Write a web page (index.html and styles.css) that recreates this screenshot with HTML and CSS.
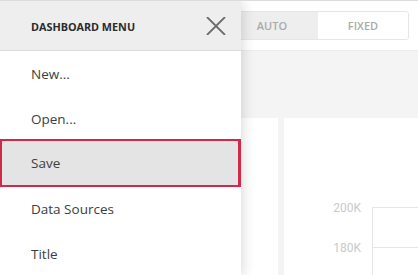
FILE: index.html
```html
<!DOCTYPE html>
<html lang="en">
<head>
<meta charset="utf-8">
<title>Dashboard Menu</title>
<link rel="stylesheet" href="styles.css">
</head>
<body>
<div class="page">
  <header class="toolbar">
    <div class="seg">
      <span class="seg-btn active">AUTO</span>
      <span class="seg-btn">FIXED</span>
    </div>
  </header>
  <main class="canvas">
    <div class="cards">
      <section class="card card-a"></section>
      <section class="card card-b">
        <svg class="chart" width="140" height="160" viewBox="0 0 140 160">
          <line x1="88.5" y1="89" x2="88.5" y2="160" stroke="#e6e6e6" stroke-width="1"/>
          <line x1="88" y1="89.5" x2="140" y2="89.5" stroke="#e6e6e6" stroke-width="1"/>
          <line x1="88" y1="129.5" x2="140" y2="129.5" stroke="#e6e6e6" stroke-width="1"/>
          <text x="77" y="94" text-anchor="end" class="axis-label">200K</text>
          <text x="77" y="134" text-anchor="end" class="axis-label">180K</text>
        </svg>
      </section>
    </div>
  </main>
  <aside class="menu">
    <div class="menu-head">
      <span class="menu-title">DASHBOARD MENU</span>
      <svg class="close" width="20" height="18" viewBox="0 0 20 18">
        <path d="M1 0 L19 18 M19 0 L1 18" stroke="#6b6b6b" stroke-width="1.8" fill="none"/>
      </svg>
    </div>
    <ul class="menu-list">
      <li class="menu-item">New...</li>
      <li class="menu-item">Open...</li>
      <li class="menu-item selected">Save</li>
      <li class="menu-item">Data Sources</li>
      <li class="menu-item">Title</li>
    </ul>
  </aside>
</div>
</body>
</html>
```
FILE: styles.css
```css
html, body {
  margin: 0;
  padding: 0;
}
body {
  width: 418px;
  height: 275px;
  overflow: hidden;
  font-family: "Open Sans", "Liberation Sans", sans-serif;
  background: #ffffff;
}
.page {
  position: relative;
  width: 418px;
  height: 275px;
  border-top: 1px solid #dcdcdc;
  box-sizing: border-box;
  display: flex;
  flex-direction: column;
  overflow: hidden;
}
.toolbar {
  height: 50px;
  flex: none;
  box-sizing: border-box;
  border-bottom: 1px solid #ececec;
  display: flex;
  justify-content: flex-end;
  align-items: flex-start;
  padding: 10px 9px 0 0;
  background: #fff;
}
.seg {
  display: flex;
  border: 1px solid #e6e6e6;
  border-radius: 3px;
  overflow: hidden;
  height: 29px;
  box-sizing: border-box;
}
.seg-btn {
  display: flex;
  align-items: center;
  justify-content: center;
  font-size: 11px;
  font-weight: 600;
  color: #ababab;
  background: #fff;
}
.seg-btn:first-child {
  width: 92px;
}
.seg-btn:last-child {
  width: 90px;
}
.seg-btn.active {
  background: #eeeeee;
}
.canvas {
  flex: 1;
  background: #f4f4f4;
  padding-top: 67px;
}
.cards {
  display: grid;
  grid-template-columns: 270px 140px;
  column-gap: 6px;
  padding-left: 8px;
  height: 100%;
}
.card {
  background: #fff;
}
.chart {
  display: block;
}
.axis-label {
  font-family: Roboto, "Liberation Sans", sans-serif;
  font-size: 12px;
  fill: #c9c9c9;
}
.menu {
  position: absolute;
  top: 0;
  left: 0;
  width: 241px;
  height: 275px;
  background: #fff;
  box-shadow: 2px 0 12px rgba(0, 0, 0, 0.14);
}
.menu-head {
  height: 49px;
  background: #eeeeee;
  border-bottom: 1px solid #dcdcdc;
  display: flex;
  align-items: center;
  justify-content: space-between;
  padding: 0 15px 0 31px;
}
.menu-title {
  font-size: 10.8px;
  font-weight: 700;
  color: #2b2b2b;
  padding-top: 1px;
}
.close {
  display: block;
  margin-top: 1px;
}
.menu-list {
  list-style: none;
  margin: 0;
  padding: 0;
}
.menu-item {
  height: 45px;
  box-sizing: border-box;
  display: flex;
  align-items: center;
  padding-left: 31px;
  font-size: 13.5px;
  color: #3d3d3d;
}
.menu-item.selected {
  height: 48px;
  margin: -2px 0 -1px;
  padding-left: 29px;
  border: 2px solid #d02a4b;
  border-right-width: 3px;
  background: #e4e4e4;
}
```
